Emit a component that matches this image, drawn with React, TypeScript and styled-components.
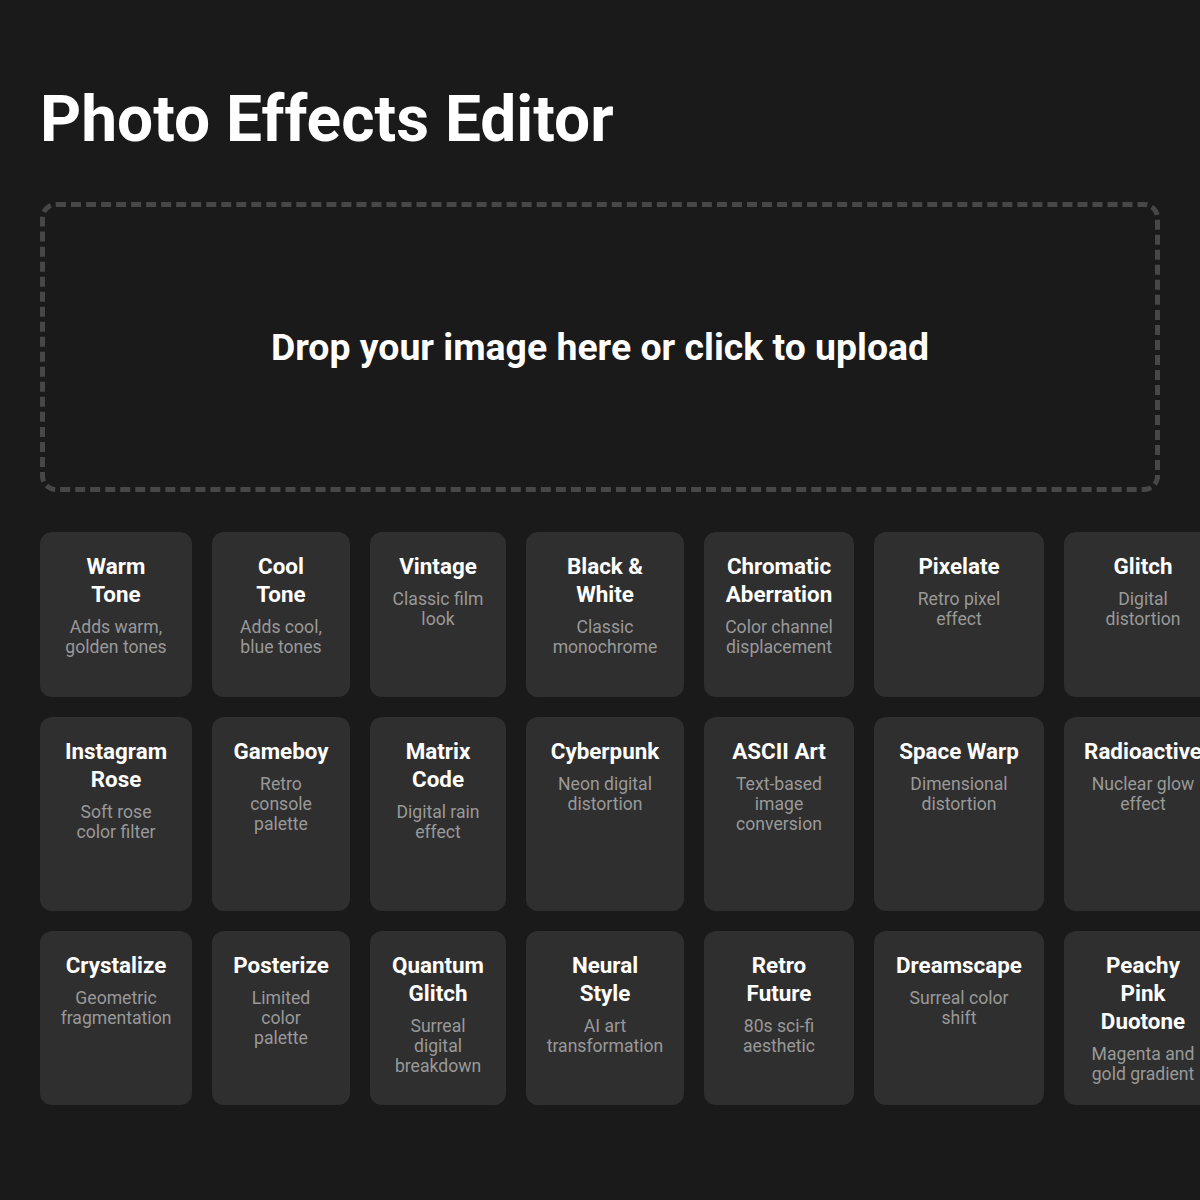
import React from "react";
import styled, { createGlobalStyle } from "styled-components";

const Global = createGlobalStyle`
  html, body {
    margin: 0;
    padding: 0;
    background: #1a1a1a;
    overflow: hidden;
  }
  body {
    font-family: Roboto, "Liberation Sans", Arial, sans-serif;
    color: #ffffff;
  }
`;

const Page = styled.main`
  padding: 40px;
  width: 1200px;
  box-sizing: border-box;
  overflow: hidden;
`;

const Title = styled.h1`
  margin: 42px 0 45px;
  font-size: 64px;
  font-weight: 700;
  line-height: 75px;
  color: #ffffff;
`;

const DropZone = styled.div`
  height: 290px;
  box-sizing: border-box;
  border: 5px dashed #474747;
  border-radius: 16px;
  display: flex;
  align-items: center;
  justify-content: center;
  cursor: pointer;
`;

const DropText = styled.p`
  margin: 0;
  font-size: 37.4px;
  font-weight: 700;
  color: #ffffff;
`;

const Grid = styled.div`
  margin-top: 40px;
  display: grid;
  grid-template-columns: 152px 138px 136px 158px 150px 170px 158px;
  grid-template-rows: 165px 194px 174px;
  gap: 20px;
  width: max-content;
`;

const Card = styled.button`
  all: unset;
  box-sizing: border-box;
  background: #2f2f2f;
  border-radius: 12px;
  padding: 20px 21px;
  display: flex;
  flex-direction: column;
  align-items: center;
  text-align: center;
  cursor: pointer;
`;

const CardTitle = styled.h3`
  margin: 0 0 9px;
  font-size: 22.4px;
  font-weight: 700;
  line-height: 28px;
  color: #ffffff;
`;

const CardDesc = styled.p`
  margin: 0;
  font-size: 17.6px;
  line-height: 20px;
  color: #999999;
`;

const effects: [string, string][] = [
  ["Warm Tone", "Adds warm, golden tones"],
  ["Cool Tone", "Adds cool, blue tones"],
  ["Vintage", "Classic film look"],
  ["Black & White", "Classic monochrome"],
  ["Chromatic Aberration", "Color channel displacement"],
  ["Pixelate", "Retro pixel effect"],
  ["Glitch", "Digital distortion"],
  ["Instagram Rose", "Soft rose color filter"],
  ["Gameboy", "Retro console palette"],
  ["Matrix Code", "Digital rain effect"],
  ["Cyberpunk", "Neon digital distortion"],
  ["ASCII Art", "Text-based image conversion"],
  ["Space Warp", "Dimensional distortion"],
  ["Radioactive", "Nuclear glow effect"],
  ["Crystalize", "Geometric fragmentation"],
  ["Posterize", "Limited color palette"],
  ["Quantum Glitch", "Surreal digital breakdown"],
  ["Neural Style", "AI art transformation"],
  ["Retro Future", "80s sci-fi aesthetic"],
  ["Dreamscape", "Surreal color shift"],
  ["Peachy Pink Duotone", "Magenta and gold gradient"],
];

export default function App() {
  return (
    <>
      <Global />
      <Page>
        <Title>Photo Effects Editor</Title>
        <DropZone>
          <DropText>Drop your image here or click to upload</DropText>
        </DropZone>
        <Grid>
          {effects.map(([name, desc]) => (
            <Card key={name}>
              <CardTitle>{name}</CardTitle>
              <CardDesc>{desc}</CardDesc>
            </Card>
          ))}
        </Grid>
      </Page>
    </>
  );
}
